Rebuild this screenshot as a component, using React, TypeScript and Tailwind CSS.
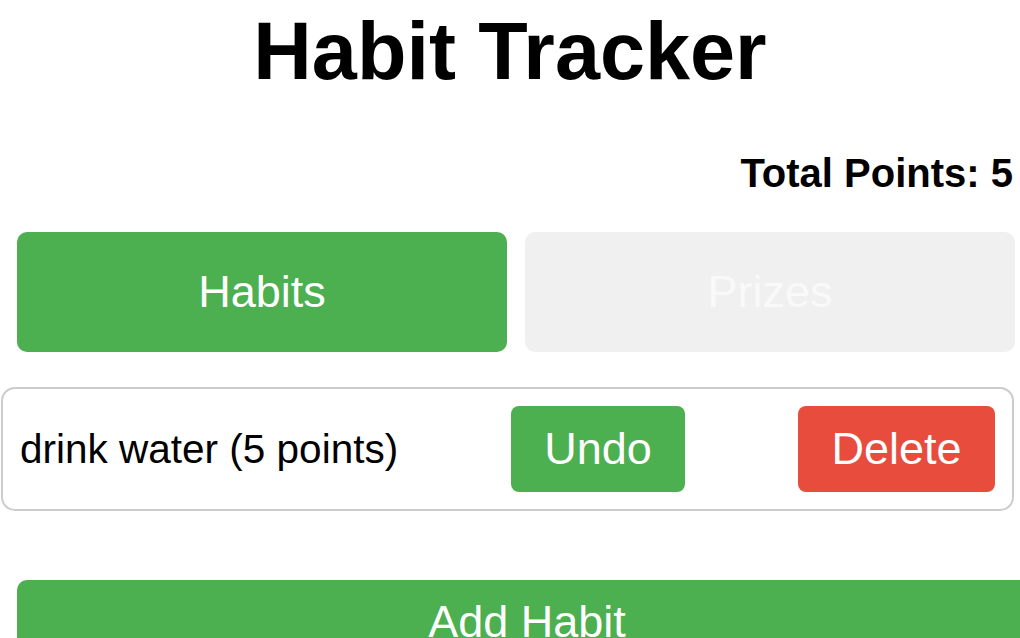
export default function App() {
  return (
    <main className="w-[1020px] h-[638px] overflow-hidden bg-white text-black font-['Liberation_Sans',Arial,sans-serif]">
      <h1 className="mt-[10px] text-center text-[81px] leading-[82px] font-bold">
        Habit Tracker
      </h1>

      <p className="mt-[61px] pr-[7px] text-right text-[40px] leading-[41px] font-bold">
        Total Points: 5
      </p>

      <div className="mt-[38px] ml-[17px] flex gap-[18px]">
        <button className="w-[490px] h-[120px] rounded-[10px] bg-[#4caf50] text-white text-[45px]">
          Habits
        </button>
        <button className="w-[490px] h-[120px] rounded-[10px] bg-[#f0f0f0] text-[#f9f9f9] text-[45px]">
          Prizes
        </button>
      </div>

      <div className="mt-[35px] ml-[1px] w-[1013px] h-[124px] border-2 border-[#cccccc] rounded-[14px] flex items-center justify-between px-[17px]">
        <span className="text-[40.5px] leading-[41px]">drink water (5 points)</span>
        <button className="w-[174px] h-[86px] rounded-[8px] bg-[#4caf50] text-white text-[45px]">
          Undo
        </button>
        <button className="w-[197px] h-[86px] rounded-[8px] bg-[#e74c3c] text-white text-[45px]">
          Delete
        </button>
      </div>

      <button className="mt-[69px] ml-[17px] w-[1020px] h-[100px] rounded-[10px] bg-[#4caf50] text-white text-[45px] leading-[45px] flex justify-center items-start pt-[19px]">
        Add Habit
      </button>
    </main>
  );
}
